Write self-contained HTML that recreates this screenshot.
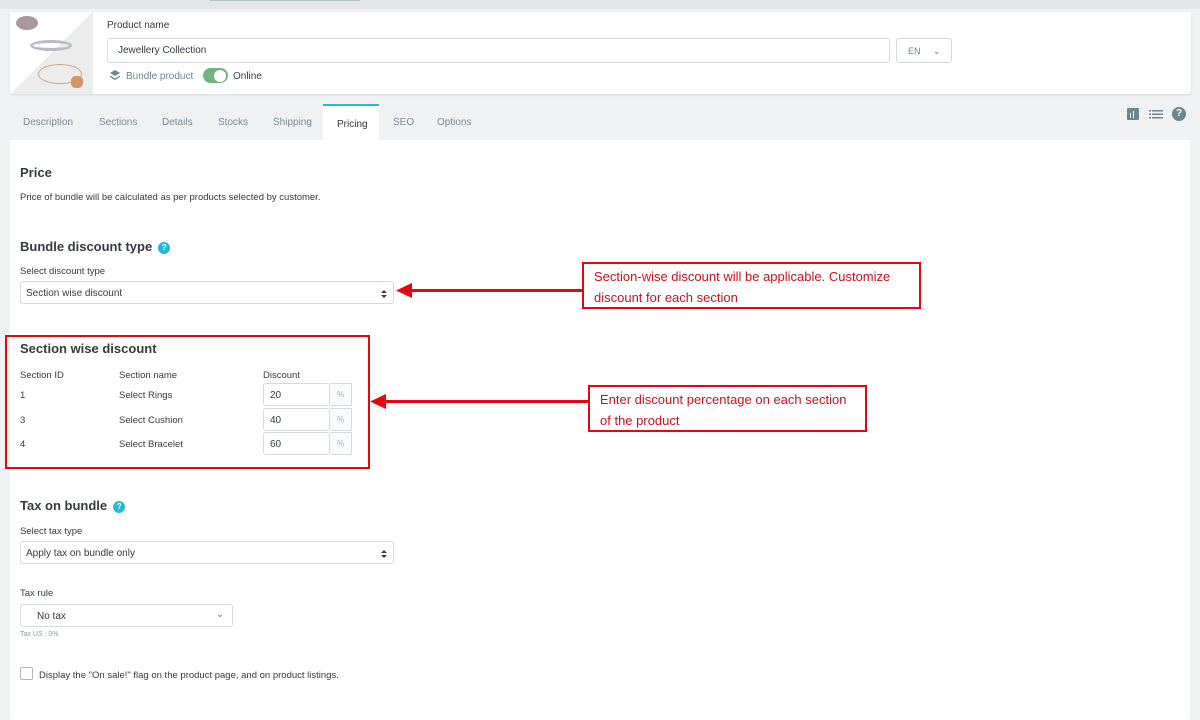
<!DOCTYPE html>
<html><head><meta charset="utf-8"><style>
*{box-sizing:border-box;margin:0;padding:0}
body{width:1200px;height:712px;overflow:hidden;background:#eff1f2;font-family:"Liberation Sans",sans-serif;color:#363a41;position:relative;font-size:10px}
.a{position:absolute}
.top{left:0;top:0;width:1200px;height:9px;background:#e4e6e7}
.hdr{left:10px;top:12px;width:1181px;height:82px;background:#fff;border-radius:3px;box-shadow:0 1px 2px rgba(0,0,0,.1)}
.img{left:10px;top:12px;width:83px;height:82px;background:linear-gradient(135deg,#fff 50%,#ececec 50%)}
.inp{border:1px solid #d6dadf;border-radius:3px;background:#fff;font-size:10px;color:#363a41}
.card{left:10px;top:140px;width:1180px;height:580px;background:#fff;border-radius:3px}
h3{position:absolute;font-size:13px;font-weight:bold;color:#363a41}
.q{display:inline-block;width:12px;height:12px;border-radius:50%;background:#25b9d7;color:#fff;font-size:8px;text-align:center;line-height:12px;vertical-align:1px;margin-left:6px}
.lbl{position:absolute;font-size:9.5px;color:#363a41}
.sel{position:absolute;height:23px;padding-left:5px;line-height:23px}
.tab{position:absolute;top:117px;font-size:10px;color:#7a8a94}
.note{position:absolute;border:2px solid #e30613;background:#fff;color:#d0101c;font-size:13px;line-height:21px;padding:2px 10px}
.pct{position:absolute;width:22px;height:23px;border:1px solid #d6dadf;border-left:none;background:#f8fafb;color:#aab;font-size:8px;text-align:center;line-height:21px}
.ud{position:absolute;right:6px;top:8px}
</style></head><body>
<div class="a top"></div><div class="a" style="left:210px;top:0;width:150px;height:1px;background:#b7c4c6"></div>
<div class="a hdr"></div>
<div class="a img"></div>
<div class="a" style="left:16px;top:16px;width:22px;height:14px;border-radius:50%;background:#a89a9c"></div>
<div class="a" style="left:30px;top:40px;width:42px;height:11px;border-radius:50%;border:3px solid #b5bcc8"></div>
<div class="a" style="left:38px;top:64px;width:44px;height:20px;border-radius:50%;border:1px solid #d3a37c"></div>
<div class="a" style="left:71px;top:76px;width:12px;height:12px;border-radius:40%;background:#d1956a"></div>
<div class="lbl" style="left:107px;top:20px;font-size:10px">Product name</div>
<div class="a inp" style="left:107px;top:38px;width:783px;height:25px;padding-left:10px;line-height:24px">Jewellery Collection</div>
<div class="a inp" style="left:896px;top:38px;width:56px;height:25px;padding-left:11px;line-height:24px;color:#6c868e;font-size:9px">EN <span style="margin-left:10px">&#8964;</span></div>
<svg class="a" style="left:109px;top:69px" width="12" height="12" viewBox="0 0 12 12"><path d="M6 1L11 4 6 7 1 4z" fill="#6c868e"/><path d="M1 6.5L6 9.5 11 6.5 11 8 6 11 1 8z" fill="#6c868e"/></svg>
<div class="lbl" style="left:126px;top:71px;color:#6c868e;font-size:10px">Bundle product</div>
<div class="a" style="left:203px;top:68px;width:25px;height:15px;border-radius:8px;background:#70b580"></div>
<div class="a" style="left:214px;top:69.5px;width:12px;height:12px;border-radius:50%;background:#fff"></div>
<div class="lbl" style="left:233px;top:71px;font-size:10px">Online</div>
<div class="tab" style="left:23px">Description</div>
<div class="tab" style="left:99px">Sections</div>
<div class="tab" style="left:162px">Details</div>
<div class="tab" style="left:218px">Stocks</div>
<div class="tab" style="left:273px">Shipping</div>
<div class="a" style="left:323px;top:104px;width:56px;height:40px;background:#fff;border-top:2px solid #25b9d7"></div>
<div class="tab" style="left:337px;top:119px;color:#363a41">Pricing</div>
<div class="tab" style="left:393px">SEO</div>
<div class="tab" style="left:437px">Options</div>
<div class="a" style="left:1127px;top:108px;width:12px;height:12px;background:#6c868e;border-radius:1px"></div>
<div class="a" style="left:1130px;top:113px;width:1px;height:5px;background:#fff"></div><div class="a" style="left:1133px;top:111px;width:1px;height:7px;background:#fff"></div>
<svg class="a" style="left:1149px;top:108px" width="14" height="12"><g fill="#6c868e"><rect x="0" y="2" width="2" height="1.5"/><rect x="3" y="2" width="11" height="1.5"/><rect x="0" y="5.5" width="2" height="1.5"/><rect x="3" y="5.5" width="11" height="1.5"/><rect x="0" y="9" width="2" height="1.5"/><rect x="3" y="9" width="11" height="1.5"/></g></svg>
<div class="a" style="left:1172px;top:107px;width:14px;height:14px;border-radius:50%;background:#6c868e;color:#fff;font-weight:bold;font-size:10px;text-align:center;line-height:14px">?</div>
<div class="a card"></div>
<h3 style="left:20px;top:165px">Price</h3>
<div class="lbl" style="left:20px;top:192px">Price of bundle will be calculated as per products selected by customer.</div>
<h3 style="left:20px;top:239px">Bundle discount type<span class="q">?</span></h3>
<div class="lbl" style="left:20px;top:266px">Select discount type</div>
<div class="inp sel" style="left:20px;top:281px;width:374px">Section wise discount<svg class="ud" width="6" height="8"><path d="M0 3L3 0 6 3zM0 5L3 8 6 5z" fill="#363a41"/></svg></div>
<div class="a" style="left:5px;top:335px;width:365px;height:134px;border:2px solid #e30613"></div>
<h3 style="left:20px;top:341px">Section wise discount</h3>
<div class="lbl" style="left:20px;top:370px">Section ID</div><div class="lbl" style="left:119px;top:370px">Section name</div><div class="lbl" style="left:263px;top:370px">Discount</div>
<div class="lbl" style="left:20px;top:390px">1</div><div class="lbl" style="left:119px;top:390px">Select Rings</div>
<div class="lbl" style="left:20px;top:415px">3</div><div class="lbl" style="left:119px;top:415px">Select Cushion</div>
<div class="lbl" style="left:20px;top:439px">4</div><div class="lbl" style="left:119px;top:439px">Select Bracelet</div>
<div class="inp sel" style="left:263px;top:383px;width:67px;padding-left:6px">20</div><div class="pct" style="left:330px;top:383px">%</div>
<div class="inp sel" style="left:263px;top:408px;width:67px;padding-left:6px">40</div><div class="pct" style="left:330px;top:408px">%</div>
<div class="inp sel" style="left:263px;top:432px;width:67px;padding-left:6px">60</div><div class="pct" style="left:330px;top:432px">%</div>
<h3 style="left:20px;top:498px">Tax on bundle<span class="q">?</span></h3>
<div class="lbl" style="left:20px;top:526px">Select tax type</div>
<div class="inp sel" style="left:20px;top:541px;width:374px">Apply tax on bundle only<svg class="ud" width="6" height="8"><path d="M0 3L3 0 6 3zM0 5L3 8 6 5z" fill="#363a41"/></svg></div>
<div class="lbl" style="left:20px;top:588px">Tax rule</div>
<div class="inp sel" style="left:20px;top:604px;width:213px;padding-left:16px">No tax<span style="position:absolute;right:8px;top:-2px;color:#6c868e">&#8964;</span></div>
<div class="lbl" style="left:20px;top:631px;font-size:7px;color:#8a9aa2">Tax US : 0%</div>
<div class="a" style="left:20px;top:667px;width:13px;height:13px;border:1px solid #b0b8bf;border-radius:2px"></div>
<div class="lbl" style="left:39px;top:670px">Display the "On sale!" flag on the product page, and on product listings.</div>
<div class="note" style="left:582px;top:262px;width:339px;height:47px">Section-wise discount will be applicable. Customize discount for each section</div>
<div class="note" style="left:588px;top:385px;width:279px;height:47px">Enter discount percentage on each section of the product</div>
<div class="a" style="left:410px;top:289px;width:172px;height:3px;background:#e30613"></div>
<svg class="a" style="left:396px;top:283px" width="16" height="15"><path d="M0 7.5L16 0 16 15z" fill="#e30613"/></svg>
<div class="a" style="left:384px;top:400px;width:204px;height:3px;background:#e30613"></div>
<svg class="a" style="left:370px;top:394px" width="16" height="15"><path d="M0 7.5L16 0 16 15z" fill="#e30613"/></svg>
</body></html>
